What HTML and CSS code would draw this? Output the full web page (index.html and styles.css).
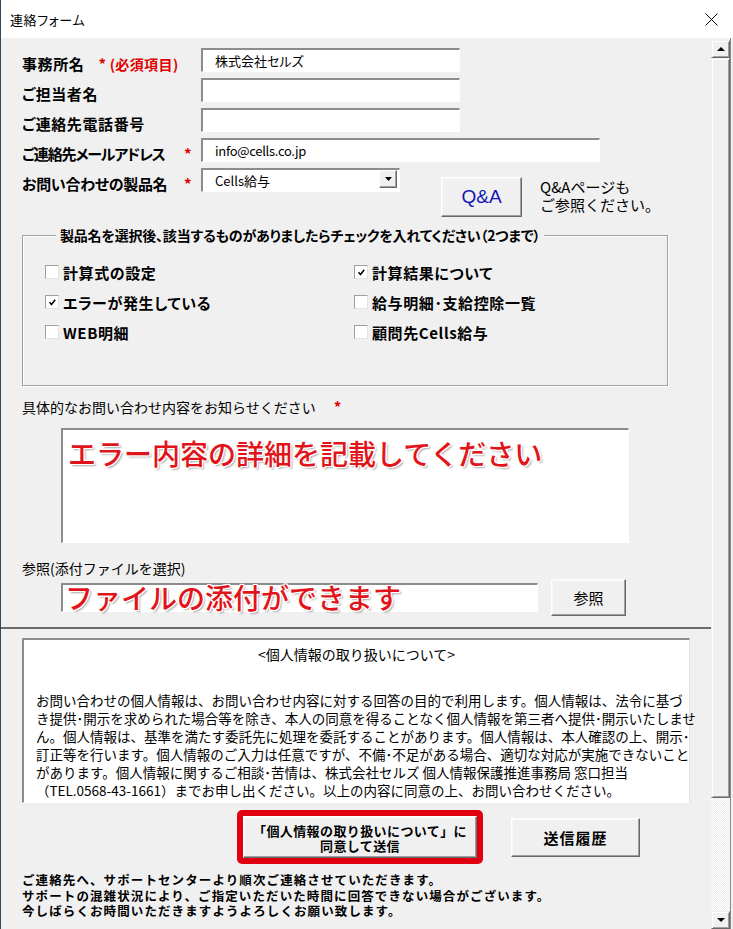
FILE: index.html
```html
<!DOCTYPE html>
<html lang="ja">
<head>
<meta charset="utf-8">
<title>連絡フォーム</title>
<link rel="stylesheet" href="styles.css">
</head>
<body>
<div class="window">
  <div class="titlebar">
    <span class="title">連絡フォーム</span>
    <svg class="close" viewBox="0 0 13 13" width="13" height="13"><path d="M0.5 0.5 L12.5 12.5 M12.5 0.5 L0.5 12.5" stroke="#000" stroke-width="1" fill="none"/></svg>
  </div>
  <div class="client">
    <div class="main">
      <div class="upper">
        <div class="fields">
          <div class="row">
            <div class="lbl lbl-wide">事務所名<span class="req req-first">*</span><span class="req-note">(必須項目)</span></div>
            <div class="tb w-short">株式会社セルズ</div>
          </div>
          <div class="row">
            <div class="lbl lbl-wide">ご担当者名</div>
            <div class="tb w-short"></div>
          </div>
          <div class="row">
            <div class="lbl lbl-wide">ご連絡先電話番号</div>
            <div class="tb w-short"></div>
          </div>
          <div class="row">
            <div class="lbl lbl-tight">ご連絡先メールアドレス</div>
            <div class="star"><span class="req">*</span></div>
            <div class="tb w-long latin">info@cells.co.jp</div>
          </div>
          <div class="row">
            <div class="lbl lbl-mid">お問い合わせの製品名</div>
            <div class="star"><span class="req">*</span></div>
            <div class="tb combo">
              <span class="combo-text">Cells給与</span>
              <span class="combo-btn"><svg viewBox="0 0 7 4" width="7" height="4"><polygon points="0,0 7,0 3.5,4" fill="#000"/></svg></span>
            </div>
            <div class="qa">
              <div class="btn qa-btn">Q&amp;A</div>
              <div class="qa-note">Q&amp;Aページも<br>ご参照ください。</div>
            </div>
          </div>
        </div>

        <fieldset class="group">
          <legend>製品名を選択後、該当するものがありましたらチェックを入れてください（2つまで）</legend>
          <div class="checks">
            <div class="chk"><span class="box"></span>計算式の設定</div>
            <div class="chk"><span class="box"><svg viewBox="0 0 9 9" width="9" height="9"><path d="M1.5 4.3 L3.5 6.5 L7.2 1.8" stroke="#000" stroke-width="1.5" fill="none"/></svg></span>計算結果について</div>
            <div class="chk"><span class="box"><svg viewBox="0 0 9 9" width="9" height="9"><path d="M1.5 4.3 L3.5 6.5 L7.2 1.8" stroke="#000" stroke-width="1.5" fill="none"/></svg></span>エラーが発生している</div>
            <div class="chk"><span class="box"></span>給与明細･支給控除一覧</div>
            <div class="chk"><span class="box"></span>WEB明細</div>
            <div class="chk"><span class="box"></span>顧問先Cells給与</div>
          </div>
        </fieldset>

        <div class="sec-label">具体的なお問い合わせ内容をお知らせください<span class="req req-sec">*</span></div>
        <div class="tb textarea"><span class="hint">エラー内容の詳細を記載してください</span></div>

        <div class="sec-label sec-label2">参照(添付ファイルを選択)</div>
        <div class="file-row">
          <div class="tb file-input"><span class="hint">ファイルの添付ができます</span></div>
          <div class="btn ref-btn">参照</div>
        </div>
      </div>

      <div class="privacy">
        <div class="privacy-title">&lt;個人情報の取り扱いについて&gt;</div>
        <p class="privacy-text">お問い合わせの個人情報は、お問い合わせ内容に対する回答の目的で利用します。個人情報は、法令に基づ<br>き提供･開示を求められた場合等を除き、本人の同意を得ることなく個人情報を第三者へ提供･開示いたしませ<br>ん。個人情報は、基準を満たす委託先に処理を委託することがあります。個人情報は、本人確認の上、開示･<br>訂正等を行います。個人情報のご入力は任意ですが、不備･不足がある場合、適切な対応が実施できないこと<br>があります。個人情報に関するご相談･苦情は、株式会社セルズ 個人情報保護推進事務局 窓口担当<br>（TEL.0568-43-1661）までお申し出ください。以上の内容に同意の上、お問い合わせください。</p>
      </div>

      <div class="actions">
        <div class="red-frame">
          <div class="btn submit-btn">「個人情報の取り扱いについて」に<br>同意して送信</div>
        </div>
        <div class="btn history-btn">送信履歴</div>
      </div>

      <div class="notes">ご連絡先へ、サポートセンターより順次ご連絡させていただきます。<br>サポートの混雑状況により、ご指定いただいた時間に回答できない場合がございます。<br>今しばらくお時間いただきますようよろしくお願い致します。</div>
    </div>

    <div class="scrollbar">
      <div class="sb-btn"><svg viewBox="0 0 8 4" width="8" height="4"><polygon points="0,4 8,4 4,0" fill="#000"/></svg></div>
      <div class="sb-thumb"></div>
      <div class="sb-track"></div>
      <div class="sb-btn"><svg viewBox="0 0 8 4" width="8" height="4"><polygon points="0,0 8,0 4,4" fill="#000"/></svg></div>
    </div>
    <div class="edge"></div>
  </div>
</div>
</body>
</html>
```
FILE: styles.css
```css
* { box-sizing: border-box; }
html, body { margin: 0; padding: 0; background: #fff; }
body {
  font-family: "Noto Sans CJK JP", "Noto Sans", sans-serif;
  color: #000;
}
.window {
  width: 733px;
  height: 929px;
  display: flex;
  flex-direction: column;
  overflow: hidden;
  border-left: 1px solid #34485a;
}
.titlebar {
  height: 38px;
  flex: none;
  background: #fff;
  display: flex;
  align-items: center;
  justify-content: space-between;
  padding: 0 15px 0 9px;
}
.title {
  font-size: 13px;
  font-feature-settings: "palt";
  letter-spacing: 0.6px;
}
.close { display: block; }

.client {
  flex: 1;
  display: flex;
  background: #f0f0f0;
}
.main { width: 710px; flex: none; }

.upper {
  padding: 10px 0 11px 21px;
  border-bottom: 2px solid #6b6b6b;
}

/* top fields */
.fields { display: flex; flex-direction: column; gap: 6px; }
.row { display: flex; align-items: flex-start; }
.lbl {
  width: 161px;
  height: 24px;
  display: flex;
  align-items: flex-end;
  font-size: 15px;
  line-height: 16px;
  font-weight: bold;
  font-feature-settings: "palt";
  letter-spacing: 0.6px;
  white-space: nowrap;
}
.lbl-wide { width: 179px; }
.lbl-tight { letter-spacing: -1.2px; }
.lbl-mid { letter-spacing: -0.3px; }
.star {
  width: 18px;
  height: 24px;
  display: flex;
  align-items: flex-end;
  padding-left: 1px;
}
.req {
  color: #e00000;
  font-weight: bold;
  font-size: 15px;
  line-height: 16px;
}
.req-first { margin-left: 14px; margin-right: 3px; }
.req-note {
  color: #e00000;
  font-weight: bold;
  font-size: 14px;
  letter-spacing: 0.4px;
}

.tb {
  background: #fff;
  border-style: solid;
  border-width: 2px 1px 1px 2px;
  border-color: #8c8c8c #fff #fff #8c8c8c;
}
.row .tb {
  height: 24px;
  font-size: 13px;
  line-height: 21px;
  padding-left: 12px;
  font-feature-settings: "palt";
  white-space: nowrap;
}
.w-short { width: 259px; }
.w-long { width: 399px; }
.latin { font-size: 12px; letter-spacing: -0.3px; }
.combo {
  width: 199px;
  display: flex;
  align-items: flex-start;
}
.combo-text { flex: 1; }
.combo-btn {
  width: 18px;
  height: 18px;
  margin: 0 2px 0 0;
  display: flex;
  align-items: center;
  justify-content: center;
  background: #f0f0f0;
  border: 1px solid;
  border-color: #fff #696969 #696969 #fff;
  box-shadow: inset -1px -1px 0 #a0a0a0;
}
.combo-btn svg { display: block; }

.btn {
  background: #f0f0f0;
  border: 1px solid;
  border-color: #fff #696969 #696969 #fff;
  box-shadow: inset -1px -1px 0 #a0a0a0, inset 1px 1px 0 #f8f8f8;
  display: flex;
  align-items: center;
  justify-content: center;
  text-align: center;
}

.qa {
  display: flex;
  align-items: flex-start;
  margin-left: 41px;
  margin-top: 9px;
}
.qa-btn {
  width: 81px;
  height: 40px;
  font-family: "Liberation Sans", Arial, sans-serif;
  font-size: 19px;
  color: #1515b4;
}
.qa-note {
  margin-left: 18px;
  margin-top: 1px;
  font-size: 15px;
  line-height: 18px;
  white-space: nowrap;
}

/* group */
.group {
  margin: 10px 0 0 0;
  width: 646px;
  padding: 0 0 45px 22px;
  border: 1px solid #a0a0a0;
  box-shadow: inset 1px 1px 0 #fff, 1px 1px 0 #fff;
  min-width: 0;
}
.group legend {
  margin-left: 11px;
  padding: 0 4px;
  font-size: 14px;
  line-height: 16px;
  font-weight: bold;
  font-feature-settings: "palt";
  letter-spacing: -0.2px;
  background: #f0f0f0;
  white-space: nowrap;
}
.checks {
  margin-top: 21px;
  display: grid;
  grid-template-columns: 309px 1fr;
  row-gap: 14px;
}
.chk {
  display: flex;
  align-items: center;
  height: 16px;
  font-size: 15px;
  font-weight: bold;
  font-feature-settings: "palt";
  letter-spacing: 0.6px;
  white-space: nowrap;
}
.box {
  width: 14px;
  height: 14px;
  margin-right: 4px;
  background: #fff;
  border: 1px solid;
  border-color: #a0a0a0 #e3e3e3 #e3e3e3 #a0a0a0;
  display: flex;
  align-items: center;
  justify-content: center;
  flex: none;
}
.box svg { display: block; }

.sec-label {
  margin-top: 13px;
  font-size: 14px;
  line-height: 16px;
  white-space: nowrap;
}
.req-sec { margin-left: 18px; font-size: 15px; }
.sec-label2 { margin-top: 17px; }

.hint {
  color: #e2141b;
  font-weight: 500;
  font-size: 28px;
  white-space: nowrap;
  text-shadow:
    -1px -1px 0 #fff, 1px -1px 0 #fff, -1px 1px 0 #fff, 1px 1px 0 #fff,
    0 -1px 0 #fff, 0 1px 0 #fff, -1px 0 0 #fff, 1px 0 0 #fff,
    2px 2px 2px rgba(0,0,0,0.35);
}
.textarea {
  margin: 13px 0 0 39px;
  width: 568px;
  height: 115px;
  padding: 6px 0 0 5px;
  line-height: 34px;
}
.file-row {
  margin: 3px 0 0 39px;
  display: flex;
  align-items: center;
  gap: 13px;
}
.file-input {
  width: 477px;
  height: 29px;
  padding-left: 2px;
  line-height: 25px;
}
.ref-btn {
  width: 75px;
  height: 37px;
  font-size: 15px;
}

/* privacy */
.privacy {
  margin: 9px 0 0 21px;
  width: 668px;
  height: 165px;
  background: #fff;
  border-style: solid;
  border-width: 2px 1px 1px 2px;
  border-color: #8c8c8c #e3e3e3 #fff #8c8c8c;
  padding: 6px 0 0 12px;
}
.privacy-title {
  text-align: center;
  font-size: 14px;
  line-height: 16px;
  padding-right: 12px;
}
.privacy-text {
  margin: 29px 0 0 0;
  font-size: 13.5px;
  line-height: 18px;
  white-space: nowrap;
}

.actions {
  margin: 7px 0 0 236px;
  display: flex;
  align-items: center;
  gap: 28px;
}
.red-frame {
  width: 246px;
  height: 54px;
  border: 6px solid #e00012;
  border-radius: 5px;
  display: flex;
}
.submit-btn {
  flex: 1;
  font-size: 13px;
  line-height: 15px;
  font-weight: bold;
  letter-spacing: 0.4px;
  padding-top: 1px;
}
.history-btn {
  width: 129px;
  height: 39px;
  font-size: 15px;
  font-weight: bold;
  letter-spacing: 1px;
}

.notes {
  margin: 8px 0 0 21px;
  font-size: 12.5px;
  line-height: 15.5px;
  font-weight: bold;
  letter-spacing: 1.1px;
  white-space: nowrap;
}

/* scrollbar */
.scrollbar {
  width: 19px;
  flex: none;
  display: flex;
  flex-direction: column;
  padding-top: 2px;
}
.sb-btn {
  height: 18px;
  flex: none;
  background: #f0f0f0;
  border: 1px solid;
  border-color: #f0f0f0 #696969 #696969 #f0f0f0;
  box-shadow: inset 1px 1px 0 #fff, inset -1px -1px 0 #a0a0a0;
  display: flex;
  align-items: center;
  justify-content: center;
}
.sb-btn svg { display: block; }
.sb-thumb {
  height: 740px;
  flex: none;
  background: #f0f0f0;
  border: 1px solid;
  border-color: #f0f0f0 #696969 #696969 #f0f0f0;
  box-shadow: inset 1px 1px 0 #fff, inset -1px -1px 0 #a0a0a0;
}
.sb-track {
  flex: 1;
  background: repeating-conic-gradient(#fff 0 25%, #ececec 0 50%) 0 0 / 2px 2px;
}
.edge {
  width: 3px;
  flex: none;
  background: #f0f0f0;
  border-left: 1px solid #8a8a8a;
}
```
